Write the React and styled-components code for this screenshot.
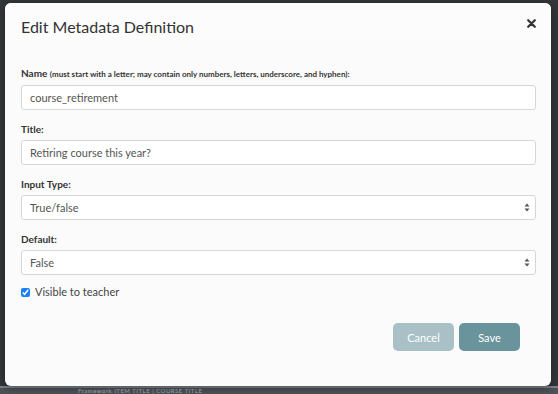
import React from "react";
import styled, { createGlobalStyle } from "styled-components";

const Global = createGlobalStyle`
  html, body {
    margin: 0;
    padding: 0;
    background: #32363a;
    font-family: Lato, "Open Sans", "Liberation Sans", sans-serif;
  }
`;

// page that sits under the dark overlay
const Page = styled.div`
  position: relative;
  width: 558px;
  height: 394px;
  overflow: hidden;
  background: #33373b;
`;

const BehindRow = styled.div`
  position: absolute;
  left: 0;
  right: 0;
  bottom: 0;
  height: 6px;
  background: #4c5257;
  border-top: 2px solid #7d8489;
  display: flex;
  align-items: flex-start;
  padding-left: 78px;
  font-size: 6px;
  line-height: 6px;
  color: #a6adb2;
  overflow: hidden;
  letter-spacing: 0.5px;
`;

const Modal = styled.div`
  position: absolute;
  left: 5px;
  top: 3px;
  width: 546px;
  height: 383px;
  background: #fbfbfb;
  border-radius: 6px;
  box-shadow: 0 2px 8px rgba(0, 0, 0, 0.4);
  display: flex;
  flex-direction: column;
  overflow: hidden;
`;

const Header = styled.div`
  display: flex;
  justify-content: space-between;
  align-items: flex-start;
  padding: 14px 15px 0 16px;
  height: 23px;
  background: #fcfcfc;
`;

const Title = styled.h1`
  margin: 0;
  font-size: 16px;
  line-height: 20px;
  font-weight: 400;
  color: #333;
`;

const Close = styled.button`
  border: none;
  background: none;
  padding: 0;
  margin-top: 2px;
  width: 9px;
  height: 9px;
  cursor: pointer;
  display: flex;
`;

const Body = styled.div`
  display: flex;
  flex-direction: column;
  gap: 11px;
  padding: 25px 15px 0 16px;
`;

const Field = styled.div`
  display: flex;
  flex-direction: column;
  gap: 3px;
`;

const Label = styled.label`
  font-size: 10px;
  line-height: 16px;
  font-weight: 700;
  color: #333;
  white-space: nowrap;
`;

const Hint = styled.span`
  font-size: 8px;
`;

const Input = styled.input`
  box-sizing: border-box;
  height: 25px;
  width: 100%;
  margin: 0;
  padding: 0 8px;
  border: 1px solid #d6d6d6;
  border-radius: 3px;
  background: #fff;
  font-family: inherit;
  font-size: 11px;
  color: #555;
  outline: none;
`;

const SelectBox = styled.div`
  box-sizing: border-box;
  height: 25px;
  display: flex;
  align-items: center;
  justify-content: space-between;
  padding: 0 5px 0 8px;
  border: 1px solid #d6d6d6;
  border-radius: 3px;
  background: #fff;
  font-size: 11px;
  color: #555;
`;

const CheckRow = styled.label`
  display: flex;
  align-items: center;
  gap: 5px;
  font-size: 11px;
  line-height: 12px;
  color: #444;
`;

const Check = styled.input`
  margin: 0;
  width: 9px;
  height: 9px;
  accent-color: #1a82f7;
`;

const Footer = styled.div`
  display: flex;
  justify-content: flex-end;
  gap: 5px;
  padding: 25px 31px 0 0;
`;

const Button = styled.button`
  width: 61px;
  height: 28px;
  border: none;
  border-radius: 5px;
  background: ${(p) => (p.$primary ? "#6a949c" : "#a8c0c6")};
  color: #fff;
  font-family: inherit;
  font-size: 11px;
  cursor: pointer;
`;

const Arrows = () => (
  <svg width="6" height="9" viewBox="0 0 6 9">
    <path d="M3 0.5 L5.5 3.5 H0.5 Z" fill="#555" />
    <path d="M3 8.5 L5.5 5.5 H0.5 Z" fill="#555" />
  </svg>
);

const Select = ({ value }) => (
  <SelectBox>
    <span>{value}</span>
    <Arrows />
  </SelectBox>
);

export default function App() {
  return (
    <>
      <Global />
      <Page>
        <BehindRow>Framework ITEM TITLE | COURSE TITLE</BehindRow>
        <Modal>
          <Header>
            <Title>Edit Metadata Definition</Title>
            <Close aria-label="close">
              <svg width="9" height="9" viewBox="0 0 9 9">
                <path
                  d="M1.2 1.2 L7.8 7.8 M7.8 1.2 L1.2 7.8"
                  stroke="#333"
                  strokeWidth="2.2"
                  strokeLinecap="round"
                />
              </svg>
            </Close>
          </Header>
          <Body>
            <Field>
              <Label>
                Name{" "}
                <Hint>
                  (must start with a letter; may contain only numbers, letters,
                  underscore, and hyphen):
                </Hint>
              </Label>
              <Input defaultValue="course_retirement" />
            </Field>
            <Field>
              <Label>Title:</Label>
              <Input defaultValue="Retiring course this year?" />
            </Field>
            <Field>
              <Label>Input Type:</Label>
              <Select value="True/false" />
            </Field>
            <Field>
              <Label>Default:</Label>
              <Select value="False" />
            </Field>
            <CheckRow>
              <Check type="checkbox" defaultChecked />
              Visible to teacher
            </CheckRow>
          </Body>
          <Footer>
            <Button>Cancel</Button>
            <Button $primary>Save</Button>
          </Footer>
        </Modal>
      </Page>
    </>
  );
}
